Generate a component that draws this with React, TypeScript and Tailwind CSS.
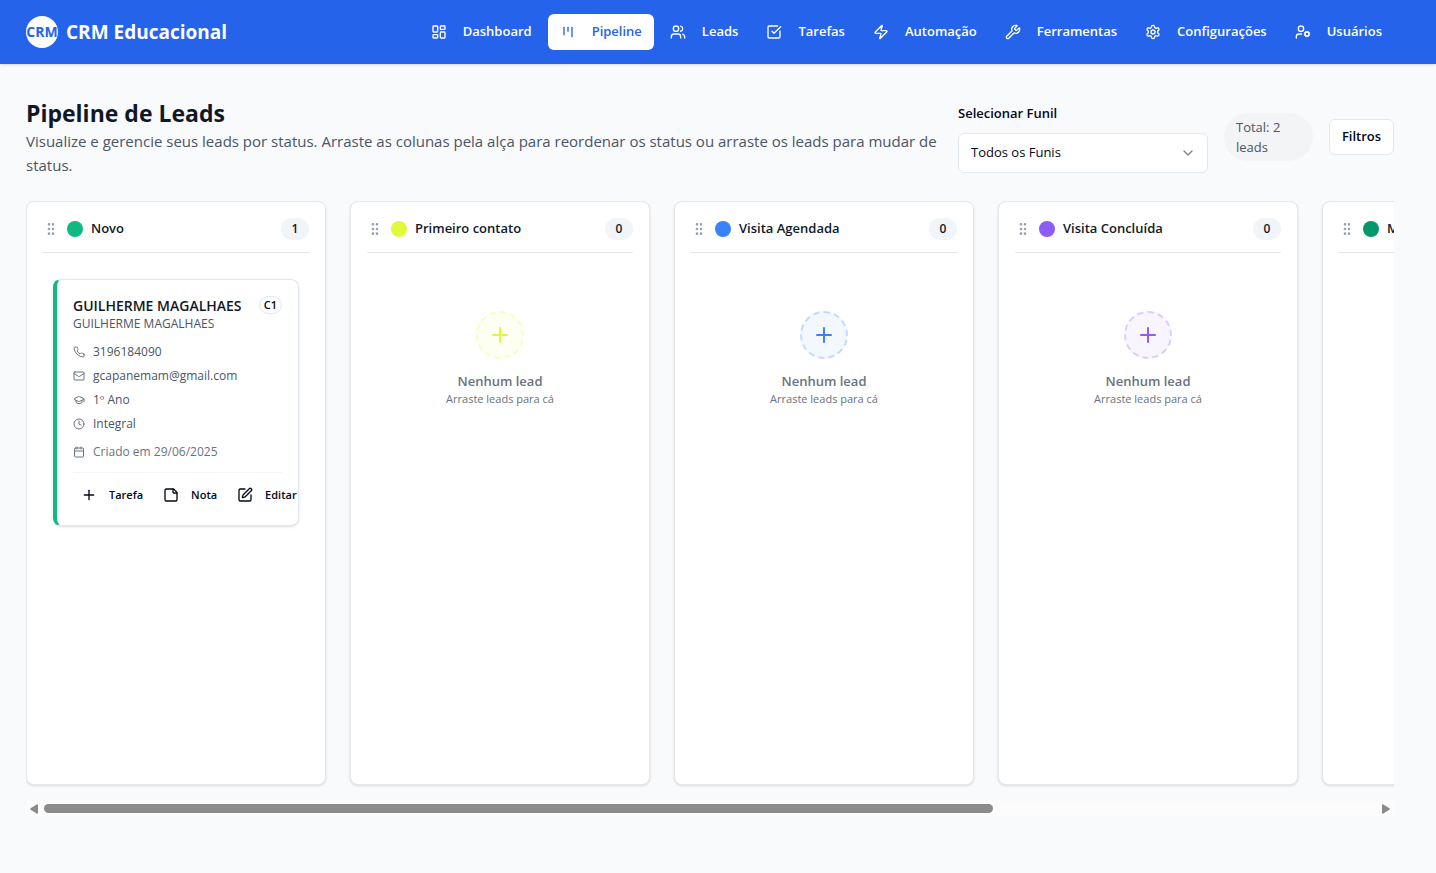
import React, { useRef, useState } from 'react';
import {
  LayoutDashboard,
  Users,
  SquareCheckBig,
  Zap,
  Wrench,
  UserCog,
  ChevronDown,
  GripVertical,
  Mail,
  GraduationCap,
  Clock,
  Calendar,
  Plus,
  StickyNote,
  SquarePen,
} from 'lucide-react';

interface IconProps {
  className?: string;
}

const KanbanIcon = ({ className }: IconProps) => (
  <svg
    viewBox="0 0 24 24"
    fill="none"
    stroke="currentColor"
    strokeWidth={2}
    strokeLinecap="round"
    strokeLinejoin="round"
    className={className}
  >
    <path d="M6 5v11" />
    <path d="M12 5v6" />
    <path d="M18 5v14" />
  </svg>
);

const SettingsIcon = ({ className }: IconProps) => (
  <svg
    viewBox="0 0 24 24"
    fill="none"
    stroke="currentColor"
    strokeWidth={2}
    strokeLinecap="round"
    strokeLinejoin="round"
    className={className}
  >
    <path d="M12.22 2h-.44a2 2 0 0 0-2 2v.18a2 2 0 0 1-1 1.73l-.43.25a2 2 0 0 1-2 0l-.15-.08a2 2 0 0 0-2.73.73l-.22.38a2 2 0 0 0 .73 2.73l.15.1a2 2 0 0 1 1 1.72v.51a2 2 0 0 1-1 1.74l-.15.09a2 2 0 0 0-.73 2.73l.22.38a2 2 0 0 0 2.73.73l.15-.08a2 2 0 0 1 2 0l.43.25a2 2 0 0 1 1 1.73V20a2 2 0 0 0 2 2h.44a2 2 0 0 0 2-2v-.18a2 2 0 0 1 1-1.73l.43-.25a2 2 0 0 1 2 0l.15.08a2 2 0 0 0 2.73-.73l.22-.39a2 2 0 0 0-.73-2.73l-.15-.08a2 2 0 0 1-1-1.74v-.5a2 2 0 0 1 1-1.74l.15-.09a2 2 0 0 0 .73-2.73l-.22-.38a2 2 0 0 0-2.73-.73l-.15.08a2 2 0 0 1-2 0l-.43-.25a2 2 0 0 1-1-1.73V4a2 2 0 0 0-2-2z" />
    <circle cx="12" cy="12" r="3" />
  </svg>
);

const PhoneIcon = ({ className }: IconProps) => (
  <svg
    viewBox="0 0 24 24"
    fill="none"
    stroke="currentColor"
    strokeWidth={2}
    strokeLinecap="round"
    strokeLinejoin="round"
    className={className}
  >
    <path d="M22 16.92v3a2 2 0 0 1-2.18 2 19.79 19.79 0 0 1-8.63-3.07 19.5 19.5 0 0 1-6-6 19.79 19.79 0 0 1-3.07-8.67A2 2 0 0 1 4.11 2h3a2 2 0 0 1 2 1.72 12.84 12.84 0 0 0 .7 2.81 2 2 0 0 1-.45 2.11L8.09 9.91a16 16 0 0 0 6 6l1.27-1.27a2 2 0 0 1 2.11-.45 12.84 12.84 0 0 0 2.81.7A2 2 0 0 1 22 16.92z" />
  </svg>
);

const navItems = [
  { label: 'Dashboard', icon: LayoutDashboard },
  { label: 'Pipeline', icon: KanbanIcon, active: true },
  { label: 'Leads', icon: Users },
  { label: 'Tarefas', icon: SquareCheckBig },
  { label: 'Automação', icon: Zap },
  { label: 'Ferramentas', icon: Wrench },
  { label: 'Configurações', icon: SettingsIcon },
  { label: 'Usuários', icon: UserCog },
];

interface Lead {
  name: string;
  contact: string;
  tag: string;
  phone: string;
  email: string;
  grade: string;
  period: string;
  createdAt: string;
}

interface Column {
  title: string;
  color: string;
  leads: Lead[];
}

const columns: Column[] = [
  {
    title: 'Novo',
    color: '#10b981',
    leads: [
      {
        name: 'GUILHERME MAGALHAES',
        contact: 'GUILHERME MAGALHAES',
        tag: 'C1',
        phone: '3196184090',
        email: 'gcapanemam@gmail.com',
        grade: '1º Ano',
        period: 'Integral',
        createdAt: '29/06/2025',
      },
    ],
  },
  { title: 'Primeiro contato', color: '#e2f83b', leads: [] },
  { title: 'Visita Agendada', color: '#3b82f6', leads: [] },
  { title: 'Visita Concluída', color: '#8b5cf6', leads: [] },
  { title: 'Matrícula', color: '#059669', leads: [] },
  { title: 'Perdido', color: '#ef4444', leads: [] },
];

const Header = () => (
  <header className="h-16 bg-[#2563eb] pr-4 text-white shadow-sm">
    <div className="mx-auto flex h-full max-w-[1400px] items-center justify-between px-4">
      <a href="#" className="flex items-center gap-2">
        <span className="flex size-8 items-center justify-center rounded-full bg-white text-sm font-bold text-[#2563eb]">
          CRM
        </span>
        <span className="text-[19px] font-bold">CRM Educacional</span>
      </a>
      <nav className="flex gap-1">
        {navItems.map(({ label, icon: Icon, active }) => (
          <a
            key={label}
            href="#"
            className={`flex h-9 items-center gap-4 rounded-md px-3 text-[13px] font-semibold ${
              active ? 'bg-white text-[#2563eb]' : 'text-white'
            }`}
          >
            <Icon className="size-4" />
            {label}
          </a>
        ))}
      </nav>
    </div>
  </header>
);

const LeadCard = ({ lead, color }: { lead: Lead; color: string }) => {
  const details = [
    { icon: PhoneIcon, text: lead.phone },
    { icon: Mail, text: lead.email },
    { icon: GraduationCap, text: lead.grade },
    { icon: Clock, text: lead.period },
  ];
  const actions = [
    { icon: Plus, label: 'Tarefa' },
    { icon: StickyNote, label: 'Nota' },
    { icon: SquarePen, label: 'Editar' },
  ];

  return (
    <article
      className="overflow-hidden rounded-lg border border-l-4 border-slate-200 bg-white p-4 shadow-sm"
      style={{ borderLeftColor: color }}
    >
      <div className="flex items-start justify-between">
        <div>
          <h4 className="text-sm font-semibold text-gray-900">{lead.name}</h4>
          <p className="text-xs text-gray-600">{lead.contact}</p>
        </div>
        <span className="flex h-[18px] items-center rounded-full border border-slate-200 px-1 text-[11px] font-semibold">
          {lead.tag}
        </span>
      </div>
      <ul className="mt-3 space-y-2 text-xs text-gray-600">
        {details.map(({ icon: Icon, text }) => (
          <li key={text} className="flex items-center gap-2">
            <Icon className="size-3 text-gray-500" />
            {text}
          </li>
        ))}
      </ul>
      <p className="mt-3 flex items-center gap-2 text-xs text-gray-500">
        <Calendar className="size-3" />
        Criado em {lead.createdAt}
      </p>
      <div className="mt-3 flex gap-1 border-t border-gray-100 pt-2">
        {actions.map(({ icon: Icon, label }) => (
          <button
            key={label}
            type="button"
            className="flex h-7 shrink-0 items-center gap-3 px-2 text-[11px] font-semibold"
          >
            <Icon className="size-4" />
            {label}
          </button>
        ))}
      </div>
    </article>
  );
};

const EmptyState = ({ color }: { color: string }) => (
  <div className="flex flex-col items-center pt-8 text-center text-gray-500">
    <div
      className="mb-3 flex size-12 items-center justify-center rounded-full border-2 border-dashed"
      style={{ backgroundColor: `${color}10`, borderColor: `${color}40` }}
    >
      <Plus className="size-6" style={{ color }} />
    </div>
    <p className="text-[13px] leading-5 font-semibold">Nenhum lead</p>
    <p className="text-[11px] leading-4">Arraste leads para cá</p>
  </div>
);

const PipelineColumn = ({ column }: { column: Column }) => (
  <section className="min-h-[584px] w-[300px] shrink-0 rounded-lg border border-gray-200 bg-white p-4 shadow-sm">
    <div className="flex items-center gap-2 border-b border-gray-200 pb-3">
      <GripVertical className="size-4 text-gray-400" />
      <span className="size-4 rounded-full" style={{ backgroundColor: column.color }} />
      <h3 className="text-[13px] font-semibold text-gray-900">{column.title}</h3>
      <span className="ml-auto flex h-[22px] w-7 items-center justify-center rounded-full bg-slate-100 text-xs font-semibold text-slate-900">
        {column.leads.length}
      </span>
    </div>
    <div className="px-[10px] pt-[26px]">
      {column.leads.length > 0 ? (
        column.leads.map((lead) => <LeadCard key={lead.phone} lead={lead} color={column.color} />)
      ) : (
        <EmptyState color={column.color} />
      )}
    </div>
  </section>
);

const Board = () => {
  const boardRef = useRef<HTMLDivElement>(null);
  const [offset, setOffset] = useState(0);

  const handleScroll = () => {
    const el = boardRef.current;
    if (el) setOffset((el.scrollLeft / el.scrollWidth) * 100);
  };
  const scrollBy = (left: number) => boardRef.current?.scrollBy({ left, behavior: 'smooth' });

  return (
    <div className="mt-6">
      <div ref={boardRef} onScroll={handleScroll} className="flex gap-6 overflow-x-auto pb-4 [scrollbar-width:none]">
        {columns.map((column) => (
          <PipelineColumn key={column.title} column={column} />
        ))}
      </div>
      {/* Scroll bar */}
      <div className="flex h-[15px] items-center gap-[6px] bg-[#fcfcfc] px-1">
        <button type="button" aria-label="Anterior" onClick={() => scrollBy(-324)}>
          <svg viewBox="0 0 8 10" className="h-[10px] w-2 fill-[#8b8b8b]">
            <path d="M8 1.2v7.6c0 .8-.8 1.1-1.4.7L.6 5.7a.8.8 0 0 1 0-1.4l6-3.8C7.2.1 8 .4 8 1.2z" />
          </svg>
        </button>
        <div className="h-[9px] flex-1">
          <div className="h-full w-[71.25%] rounded-full bg-[#8b8b8b]" style={{ marginLeft: `${offset}%` }} />
        </div>
        <button type="button" aria-label="Próximo" onClick={() => scrollBy(324)}>
          <svg viewBox="0 0 8 10" className="h-[10px] w-2 fill-[#8b8b8b]">
            <path d="M0 1.2v7.6c0 .8.8 1.1 1.4.7l6-3.8a.8.8 0 0 0 0-1.4l-6-3.8C.8.1 0 .4 0 1.2z" />
          </svg>
        </button>
      </div>
    </div>
  );
};

const App = () => {
  return (
    <div className="min-h-screen bg-[#f9fafc] font-['Open_Sans',sans-serif] text-[#020817]">
      <Header />
      <main className="pr-4">
        <div className="mx-auto max-w-[1400px] px-4 pt-[33px] pb-14">
          {/* Page heading */}
          <div className="flex items-center gap-4">
            <div className="flex-1">
              <h1 className="text-[23px] leading-8 font-bold text-gray-900">Pipeline de Leads</h1>
              <p className="text-[15px] leading-6 text-gray-600">
                Visualize e gerencie seus leads por status. Arraste as colunas pela alça para reordenar os status ou
                arraste os leads para mudar de status.
              </p>
            </div>
            <div className="flex w-[250px] shrink-0 flex-col gap-2">
              <label htmlFor="funil" className="text-[13px] leading-6 font-semibold">
                Selecionar Funil
              </label>
              <div className="relative">
                <select
                  id="funil"
                  className="h-10 w-full appearance-none rounded-md border border-slate-200 bg-white px-3 text-[13px]"
                >
                  <option>Todos os Funis</option>
                </select>
                <ChevronDown className="pointer-events-none absolute top-3 right-3 size-4 opacity-50" />
              </div>
            </div>
            <div className="w-[89px] shrink-0 rounded-full bg-gray-100 px-3 py-1 text-[13px] leading-5 text-gray-600">
              Total: 2 leads
            </div>
            <button
              type="button"
              className="h-9 w-[65px] shrink-0 rounded-md border border-slate-200 bg-white text-[13px] font-semibold"
            >
              Filtros
            </button>
          </div>
          <Board />
        </div>
      </main>
    </div>
  );
};

export default App;
